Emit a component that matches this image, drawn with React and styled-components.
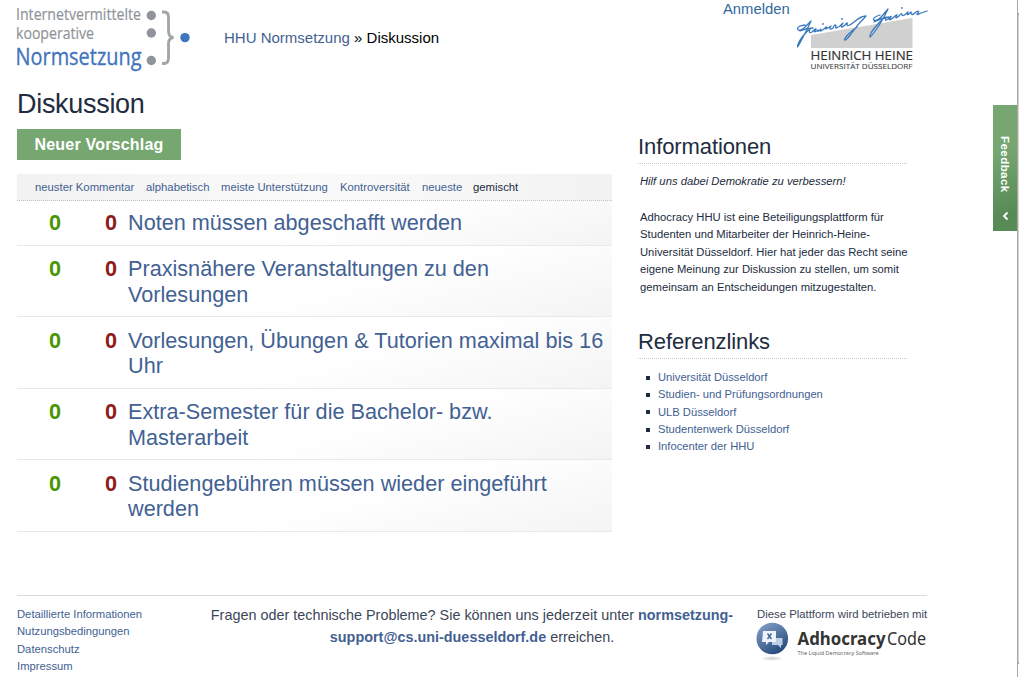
import React from "react";
import styled, { createGlobalStyle } from "styled-components";

const Global = createGlobalStyle`
  * { box-sizing: border-box; }
  body { margin: 0; background: #fff; overflow: hidden; font-family: "Liberation Sans", Arial, sans-serif; color: #222c40; }
  a { color: #426193; text-decoration: none; }
  ul { list-style: none; margin: 0; padding: 0; }
`;

const Shell = styled.div`display: flex; justify-content: space-between; height: 677px; overflow: hidden;`;
const Page = styled.div`width: 910px; margin-left: 17px;`;
const Header = styled.header`display: flex; height: 88px;`;
const Brand = styled.svg`display: block; flex: none; width: 190px; height: 80px; margin-left: -10px;`;
const Crumbs = styled.nav`flex: none; width: 526px; padding: 29px 0 0 27px; font-size: 15px; line-height: 18px; color: #000;`;
const Login = styled.a`flex: none; width: 68px; line-height: 18px; font-size: 14.8px; color: #30699c;`;
const University = styled.svg`display: block; flex: none; width: 150px; height: 80px;`;

const Title = styled.h1`margin: 0; height: 41px; line-height: 32px; font-size: 27px; letter-spacing: -0.3px; font-weight: 400;`;
const Columns = styled.div`display: flex; gap: 26px; height: 466px;`;
const Main = styled.main`width: 595px;`;
const Button = styled.button`
  display: block; width: 164px; height: 31px; padding: 0; border: 0; margin-bottom: 14px;
  background: #76a771; color: #fff; font: bold 16px/31px "Liberation Sans", Arial, sans-serif; letter-spacing: 0.2px;
`;
const SortBar = styled.div`
  display: flex; gap: 12px; height: 27px; padding-left: 18px; font-size: 11.3px; line-height: 27px;
  border-bottom: 1px dotted #c4c4c4; background: linear-gradient(90deg, #f2f2f2, #fafafa 50%, #f2f2f2);
`;
const SortItem = styled.a`color: ${(p) => (p.$active ? "#222c40" : "#426193")}; width: ${(p) => p.$w}px; white-space: nowrap;`;
const Proposal = styled.li`
  display: flex; height: ${(p) => p.$h}px; padding-top: ${(p) => p.$pad}px; font-size: 21.65px; line-height: ${(p) => p.$lh}px;
  border-bottom: 1px solid #e9e9e9; background: linear-gradient(165deg, #fff 55%, #f4f4f4);
`;
const Score = styled.span`
  flex: none; width: ${(p) => p.$w}px; text-align: right; font-weight: bold; font-size: 21.65px;
  color: ${(p) => p.$color};
`;
const ProposalLink = styled.a`margin-left: 11px; white-space: nowrap;`;

const Aside = styled.aside`width: 270px;`;
const SideTitle = styled.h2`
  margin: ${(p) => p.$top}px 0 0 0; width: 269px; height: 30px; padding-top: 1px; font-size: 22px; letter-spacing: -0.1px; font-weight: 400; line-height: 24px;
  border-bottom: 1px dotted #c4c4c4;
`;
const Text = styled.p`
  margin: ${(p) => p.$top}px 0 0 2px; font-size: 11.25px; line-height: 17.5px; white-space: nowrap;
  font-style: ${(p) => (p.$italic ? "italic" : "normal")};
`;
const Links = styled.ul`padding: 10px 0 0 8px; font-size: 11.2px; line-height: 17.3px;`;
const LinkItem = styled.li`display: flex; align-items: center; gap: 8px; &::before { content: ""; width: 4px; height: 4px; background: #222c40; }`;

const Footer = styled.footer`display: flex; justify-content: space-between; height: 82px; border-top: 1px solid #dadada; padding-top: 10px;`;
const FooterLinks = styled.ul`width: 180px; font-size: 11.25px; line-height: 17.3px;`;
const Contact = styled.p`margin: -2px 0 0; width: 550px; padding-right: 10px; font-size: 14.4px; line-height: 22px; text-align: center; color: #3b4658; white-space: nowrap;`;
const Powered = styled.div`width: 170px; font-size: 11.35px; line-height: 17px; color: #3b4658; white-space: nowrap;`;
const Adhocracy = styled.svg`display: block; width: 172px; height: 42px; margin: -2px 0 0 -1px;`;

const Edge = styled.div`display: flex;`;
const Feedback = styled.button`
  display: flex; align-items: center; width: 24px; height: 126px; margin-top: 105px; border: 0; padding: 31px 0 10px; writing-mode: vertical-rl;
  justify-content: space-between; color: #fff; font: bold 11.5px "Liberation Sans", Arial, sans-serif; letter-spacing: 0.45px;
  background: linear-gradient(160deg, #76a771 35%, #578a55 85%);
`;
const Arrow = styled.svg`width: 7px; height: 10px;`;
const ScrollEdge = styled.div`
  width: 2px;
  background: linear-gradient(90deg, #aaa5a0 50%, transparent 50%), linear-gradient(#fff 13px, #aaa5a0 13px 15px, #d8d4d0 15px 662px, #aaa5a0 662px 664px, #fff 664px);
`;

const sorts = [["neuster Kommentar", 99], ["alphabetisch", 63], ["meiste Unterstützung", 107], ["Kontroversität", 70], ["neueste", 39], ["gemischt", 48]];
const proposals = [
  { lines: ["Noten müssen abgeschafft werden"], h: 45, pad: 9, lh: 26 },
  { lines: ["Praxisnähere Veranstaltungen zu den", "Vorlesungen"], h: 71, pad: 10, lh: 26 },
  { lines: ["Vorlesungen, Übungen & Tutorien maximal bis 16", "Uhr"], h: 72, pad: 11, lh: 25 },
  { lines: ["Extra-Semester für die Bachelor- bzw.", "Masterarbeit"], h: 71, pad: 10, lh: 26 },
  { lines: ["Studiengebühren müssen wieder eingeführt", "werden"], h: 72, pad: 11, lh: 25 },
];
const refs = ["Universität Düsseldorf", "Studien- und Prüfungsordnungen", "ULB Düsseldorf", "Studentenwerk Düsseldorf", "Infocenter der HHU"];
const info = ["Adhocracy HHU ist eine Beteiligungsplattform für", "Studenten und Mitarbeiter der Heinrich-Heine-", "Universität Düsseldorf. Hier hat jeder das Recht seine", "eigene Meinung zur Diskussion zu stellen, um somit", "gemeinsam an Entscheidungen mitzugestalten."];
const footerLinks = ["Detaillierte Informationen", "Nutzungsbedingungen", "Datenschutz", "Impressum"];

function BrandLogo() {
  return (
    <Brand viewBox="7 0 190 80" fontFamily="Open Sans, sans-serif">
      <g fill="#8e9499">
        <g stroke="#8e9499" strokeWidth=".2">
          <text x="16" y="20" fontSize="16.5" textLength="125" lengthAdjust="spacingAndGlyphs">Internetvermittelte</text>
          <text x="16" y="39" fontSize="16" textLength="78" lengthAdjust="spacingAndGlyphs">kooperative</text>
        </g>
        <circle cx="151.3" cy="15.5" r="4.7" /><circle cx="151.3" cy="33" r="4.7" /><circle cx="151.3" cy="60.5" r="4.7" />
      </g>
      <text x="15.500" y="65" fontSize="24.5" fill="#3f74be" stroke="#3f74be" strokeWidth=".35" textLength="126" lengthAdjust="spacingAndGlyphs">Normsetzung</text>
      <path d="M162 12H164Q168.500 12 168.500 17V31Q168.500 37 173.500 37.500Q168.500 38 168.500 44V58Q168.500 63.500 164 63.500H162" fill="none" stroke="#a0a5a8" strokeWidth="2.8" />
      <circle cx="185" cy="37.600" r="4.700" fill="#3f74be" />
    </Brand>
  );
}

function UniversityLogo() {
  return (
    <University viewBox="791 0 150 80" fontFamily="Open Sans, sans-serif">
      <path d="M811 35L912.500 18V48H811Z" fill="#d0d0d0" />
      <g fill="none" stroke="#3979bd" strokeWidth="1.300" strokeLinecap="round" strokeLinejoin="round">
        <path d="M805 25Q797 26 797.500 29Q799 32 804 28L811 21Q807 30 802 39Q798 47 797.500 47Q797 44 803 36Q807 31 810 29Q808 34 812 32Q816 28 816 29Q812 34 818 30Q817 33 821 29Q819 33 824 29Q828 25 826 29Q828 28 831 26Q828 31 833 28Q835 23 836 26Q834 30 840 26L843 23Q839 30 845 25Q848 21 847 25Q848 27 854 22Q861 16 866 16Q858 24 851 34Q845 42 844.500 39.500Q846 35 857 27" />
        <path d="M880 15Q873 17 873.500 20Q877 22 882 16L888 9Q884 18 878 27Q871 37 870 37Q869 34 877 25Q883 18 886 17Q884 22 888 19Q892 15 891 17Q887 22 893 18Q897 14 897 15Q894 20 899 16Q902 12 902 15Q903 17 908 12Q906 17 911 12Q911 17 916 12Q920 10 918 13Q915 16 921 13L927 11" />
        <path d="M800 31Q806 28 813 28M874 22Q881 18 889 17" />
        <circle cx="823" cy="24" r=".3" /><circle cx="842" cy="19" r=".3" /><circle cx="902" cy="8" r=".3" />
      </g>
      <text x="810.500" y="60" fontSize="12.800" fill="#333" stroke="#333" strokeWidth=".2" textLength="102.500" lengthAdjust="spacingAndGlyphs">HEINRICH HEINE</text>
      <text x="810.500" y="69" fontSize="7.400" fill="#444" stroke="#444" strokeWidth=".1" textLength="102" lengthAdjust="spacingAndGlyphs">UNIVERSITÄT DÜSSELDORF</text>
    </University>
  );
}

function AdhocracyLogo() {
  return (
    <Adhocracy viewBox="756 621 172 42">
      <defs>
        <linearGradient id="globe" x2=".6" y2="1"><stop stopColor="#89a5ca" /><stop offset="1" stopColor="#294c7f" /></linearGradient>
        <radialGradient id="shade"><stop stopColor="#ccc" /><stop offset="1" stopColor="#fff" /></radialGradient>
      </defs>
      <ellipse cx="772" cy="658.500" rx="12" ry="2.500" fill="url(#shade)" />
      <circle cx="772.300" cy="638.500" r="15.800" fill="url(#globe)" />
      <path d="M776 638H782.500V645H781V648L778 645H772V642H776Z" fill="#bdcee5" />
      <path d="M763 631H776V642H769L766 645V642H762Z" fill="#edf3fa" />
      <path d="M767.500 633.500L771.500 639M771.500 633.500L767.500 639" stroke="#3c5e91" strokeWidth="1.300" />
      <g fontFamily="Noto Sans, sans-serif" fill="#333">
        <text x="797.500" y="644.500" fontSize="17.500" fontWeight="700" textLength="88" lengthAdjust="spacingAndGlyphs">Adhocracy</text>
        <text x="887" y="644.500" fontSize="17.500" textLength="39" lengthAdjust="spacingAndGlyphs">Code</text>
        <text x="797.500" y="655" fontSize="5.500" fill="#666" textLength="81" lengthAdjust="spacingAndGlyphs">The Liquid Democracy Software</text>
      </g>
    </Adhocracy>
  );
}

export default function App() {
  return (
    <Shell>
      <Global />
      <Page>
        <Header>
          <BrandLogo />
          <Crumbs><a href="#">HHU Normsetzung</a> » Diskussion</Crumbs>
          <Login href="#">Anmelden</Login>
          <UniversityLogo />
        </Header>
        <Title>Diskussion</Title>
        <Columns>
          <Main>
            <Button>Neuer Vorschlag</Button>
            <SortBar>{sorts.map(([t, w], i) => <SortItem key={t} $w={w} $active={i === 5}>{t}</SortItem>)}</SortBar>
            <ul>
              {proposals.map(({ lines, h, pad, lh }) => (
                <Proposal key={lines[0]} $h={h} $pad={pad} $lh={lh}>
                  <Score $w={44} $color="#479600">0</Score>
                  <Score $w={56} $color="#8f1b18">0</Score>
                  <ProposalLink href="#">{lines.map((l, i) => <React.Fragment key={l}>{i > 0 && <br />}{l}</React.Fragment>)}</ProposalLink>
                </Proposal>
              ))}
            </ul>
          </Main>
          <Aside>
            <SideTitle $top={5}>Informationen</SideTitle>
            <Text $top={9} $italic>Hilf uns dabei Demokratie zu verbessern!</Text>
            <Text $top={18}>{info.map((l) => <React.Fragment key={l}>{l}<br /></React.Fragment>)}</Text>
            <SideTitle $top={33}>Referenzlinks</SideTitle>
            <Links>{refs.map((t) => <LinkItem key={t}><a href="#">{t}</a></LinkItem>)}</Links>
          </Aside>
        </Columns>
        <Footer>
          <FooterLinks>{footerLinks.map((t) => <li key={t}><a href="#">{t}</a></li>)}</FooterLinks>
          <Contact>
            Fragen oder technische Probleme? Sie können uns jederzeit unter <a href="#"><b>normsetzung-<br />support@cs.uni-duesseldorf.de</b></a> erreichen.
          </Contact>
          <Powered>Diese Plattform wird betrieben mit<AdhocracyLogo /></Powered>
        </Footer>
      </Page>
      <Edge>
        <Feedback>Feedback<Arrow viewBox="0 0 7 10"><path d="M5.500 1.500L2 5L5.500 8.500" fill="none" stroke="#fff" strokeWidth="1.800" /></Arrow></Feedback>
        <ScrollEdge />
      </Edge>
    </Shell>
  );
}
